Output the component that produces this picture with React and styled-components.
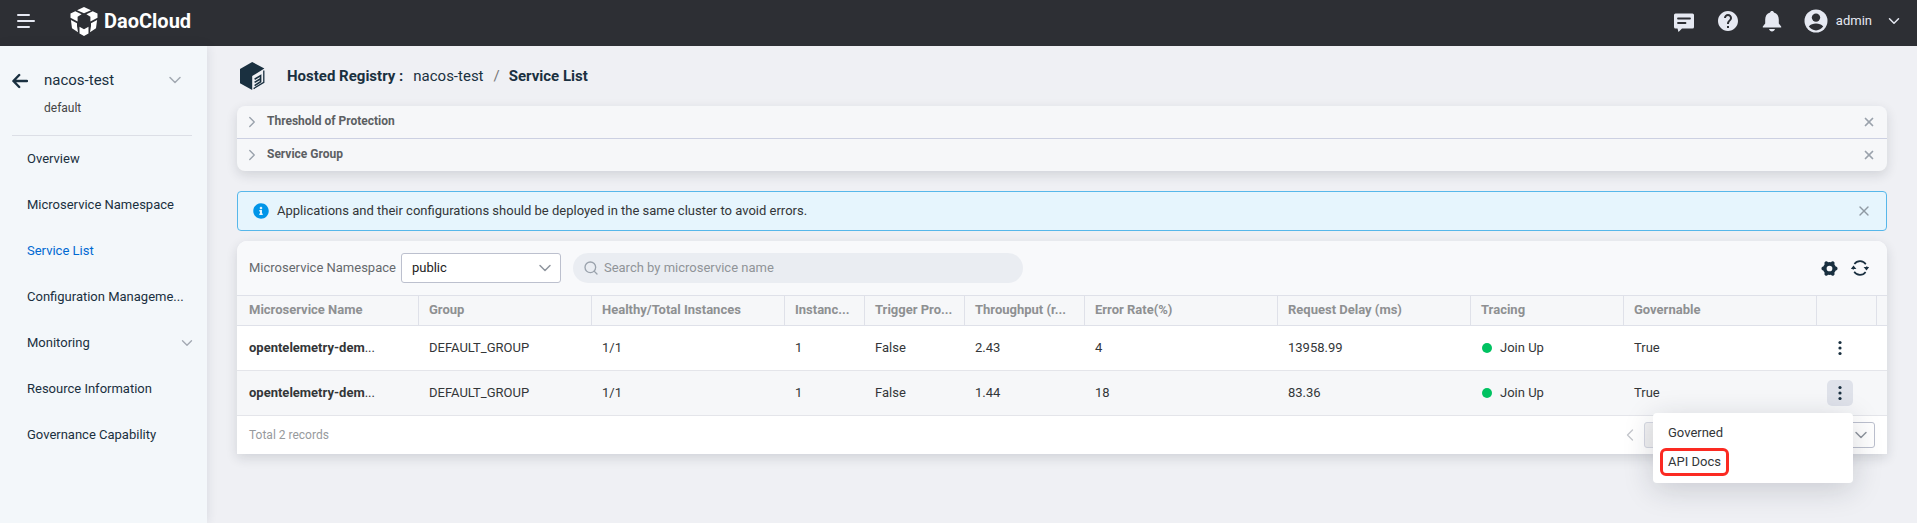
import React from 'react';
import styled, { createGlobalStyle } from 'styled-components';
import { ChevronDown, ChevronLeft, ChevronRight, Search, X } from 'lucide-react';
import { MdHelp } from 'react-icons/md';
import { FaInfoCircle } from 'react-icons/fa';

const GlobalStyle = createGlobalStyle`
  *, *::before, *::after { box-sizing: border-box; }
  body {
    margin: 0;
    background: #eff0f4;
    color: #333638;
    font-family: Roboto, "Noto Sans", sans-serif;
    font-size: 13px;
    line-height: 20px;
  }
  button, input, select { font: inherit; color: inherit; }
  svg { display: block; flex: none; }
`;

const Page = styled.div`
  display: flex;
  flex-direction: column;
  min-height: 100vh;
`;

const IconButton = styled.button`
  display: flex;
  align-items: center;
  justify-content: center;
  padding: 0;
  border: 0;
  background: none;
  color: ${(p) => p.$color || 'inherit'};
  cursor: pointer;
`;

/* ---------- top bar ---------- */

const TopBar = styled.header`
  display: flex;
  align-items: center;
  justify-content: space-between;
  height: 46px;
  padding: 0 14px 4px 16px;
  background: #2d2f34;
  color: #e6e9f2;
`;

const Brand = styled.div`
  display: flex;
  align-items: center;
  gap: 34px;
`;

const Logo = styled.a`
  display: flex;
  align-items: center;
  gap: 6px;
  color: #fff;
  font-size: 20px;
  font-weight: 700;
  text-decoration: none;
`;

const TopActions = styled.div`
  display: flex;
  align-items: center;
  gap: 20px;
`;

const UserButton = styled(IconButton)`
  gap: 8px;
  span { margin-right: 5px; }
`;

/* ---------- side bar ---------- */

const Body = styled.div`
  display: flex;
  flex: 1;
`;

const Sidebar = styled.aside`
  flex: none;
  width: 207px;
  background: #f3f7fa;
  box-shadow: 0 0 10px rgba(40, 50, 70, 0.12);
  color: #1a3040;
`;

const Workspace = styled.div`
  display: flex;
  align-items: flex-start;
  gap: 16px;
  height: 90px;
  margin: 0 15px 0 12px;
  padding-top: 24px;
  border-bottom: 1px solid #dcdfe6;
`;

const BackButton = styled(IconButton)`
  height: 22px;
`;

const WorkspaceText = styled.div`
  flex: 1;
`;

const WorkspacePicker = styled(IconButton)`
  justify-content: space-between;
  width: 100%;
  padding-right: 7px;
  font-size: 15px;
  svg { color: #a3a9b2; }
`;

const WorkspaceSub = styled.div`
  margin-top: 8px;
  color: #444;
  font-size: 12px;
`;

const NavItem = styled.a`
  display: flex;
  align-items: center;
  justify-content: space-between;
  height: 46px;
  padding: 0 11px 0 27px;
  color: ${(p) => (p.$active ? '#0069d2' : 'inherit')};
  text-decoration: none;
  svg { color: #a3a9b2; }
`;

/* ---------- main ---------- */

const Main = styled.main`
  flex: 1;
  min-width: 0;
  padding: 0 30px 30px;
`;

const Breadcrumb = styled.nav`
  display: flex;
  align-items: center;
  height: 60px;
  color: #1a3040;
  font-size: 15px;
  svg { margin: 0 22px 0 3px; }
  a { margin: 0 10px; color: inherit; text-decoration: none; }
  span { color: #777; }
  h1 { margin: 0 0 0 9px; font-size: 15px; }
`;

const Collapse = styled.section`
  border-radius: 8px;
  background: #f6f7f9;
  box-shadow: 0 4px 12px rgba(30, 35, 50, 0.14);
`;

const CollapseRow = styled.div`
  display: flex;
  align-items: center;
  justify-content: space-between;
  height: 32px;
  padding: 0 11px 0 6px;
  color: #9aa2ac;
  & + & {
    height: 33px;
    border-top: 1px solid #ccd0e2;
  }
`;

const CollapseToggle = styled(IconButton)`
  gap: 6px;
  font-size: 12px;
  font-weight: 700;
  span { padding-bottom: 2px; color: #5c5f63; }
`;

const Alert = styled.div`
  display: flex;
  align-items: center;
  gap: 8px;
  height: 40px;
  margin: 20px 0 10px;
  padding: 0 14px 0 15px;
  border: 1px solid #57b7ea;
  border-radius: 4px;
  background: #e6f5fd;
  p { flex: 1; margin: 0; }
  > svg { color: #0095e8; }
`;

const Panel = styled.section`
  border-radius: 10px 10px 0 0;
  background: #fff;
  box-shadow: 0 4px 12px rgba(30, 35, 50, 0.14);
`;

const Toolbar = styled.div`
  display: flex;
  align-items: center;
  height: 54px;
  padding: 0 18px 0 12px;
  border-radius: 10px 10px 0 0;
  background: #f8f9fb;
  label { color: #66696d; }
`;

const SelectWrap = styled.div`
  position: relative;
  width: ${(p) => p.$width};
  margin-left: ${(p) => p.$gap || '0'};
  svg {
    position: absolute;
    top: 0;
    bottom: 0;
    right: ${(p) => p.$inset || '6px'};
    margin: auto;
    color: #8f959e;
    pointer-events: none;
  }
`;

const Select = styled.select`
  display: block;
  width: 100%;
  height: ${(p) => p.$height};
  padding: 0 10px;
  border: 1px solid #bcc0ce;
  border-radius: 3px;
  background: #fff;
  color: #222;
  appearance: none;
`;

const SearchBox = styled.div`
  display: flex;
  align-items: center;
  gap: 5px;
  width: 450px;
  height: 30px;
  margin-left: 12px;
  padding: 0 10px;
  border-radius: 15px;
  background: #eaedf2;
  color: #9aa2ac;
  input {
    flex: 1;
    padding: 0;
    border: 0;
    outline: 0;
    background: none;
    color: #333638;
  }
  input::placeholder { color: #909498; opacity: 1; }
`;

const Tools = styled.div`
  display: flex;
  gap: 13px;
  margin-left: auto;
`;

const Table = styled.table`
  width: 100%;
  border-collapse: separate;
  border-spacing: 0;
  table-layout: fixed;
`;

const Th = styled.th`
  height: 31px;
  padding: 0 0 1px 10px;
  border: solid #dfe1e9;
  border-width: 1px 1px 1px 0;
  background: #f6f7f9;
  color: #8e9092;
  font-weight: 700;
  line-height: 20px;
  text-align: left;
  white-space: nowrap;
  &:first-child { padding-left: 12px; }
  &:last-child { border-right: 0; }
`;

const Row = styled.tr`
  background: ${(p) => (p.$hover ? '#f6f7f9' : '#fff')};
`;

const Td = styled.td`
  height: 45px;
  padding: 0 0 0 10px;
  border-bottom: 1px solid #e4e5ea;
  white-space: nowrap;
  &:first-child { padding-left: 12px; }
`;

const Status = styled.span`
  display: flex;
  align-items: center;
  gap: 8px;
  padding-bottom: 1px;
  &::before {
    content: '';
    width: 10px;
    height: 10px;
    margin-left: 1px;
    border-radius: 50%;
    background: #00c261;
  }
`;

const MenuAnchor = styled.div`
  position: relative;
  width: 26px;
`;

const MoreButton = styled(IconButton)`
  width: 26px;
  height: 26px;
  border-radius: 5px;
  background: ${(p) => (p.$open ? '#dfe2ea' : 'transparent')};
`;

const Menu = styled.div`
  position: absolute;
  z-index: 1;
  top: 33px;
  right: 0;
  display: flex;
  flex-direction: column;
  width: 200px;
  padding: 5px 7px;
  border-radius: 4px;
  background: #fff;
  box-shadow: 0 6px 30px rgba(30, 35, 50, 0.18);
`;

const MenuItem = styled.button`
  align-self: flex-start;
  height: ${(p) => (p.$marked ? '28px' : '30px')};
  padding: 0 5px;
  border: 3px solid ${(p) => (p.$marked ? '#fb2a22' : 'transparent')};
  border-radius: 6px;
  background: none;
  &:last-child { margin-bottom: 2px; }
`;

const Footer = styled.footer`
  display: flex;
  align-items: center;
  justify-content: space-between;
  height: 38px;
  padding: 0 12px;
  color: #979a9d;
  font-size: 12px;
`;

const Pager = styled.div`
  display: flex;
  align-items: center;
  color: #c4c7cc;
`;

const PageInput = styled.input`
  width: 50px;
  height: 26px;
  margin: 0 4px;
  border: 1px solid #d5d8e2;
  border-radius: 3px;
  background: #f1f1f2;
`;

/* ---------- drawings ---------- */

const MenuIcon = () => (
  <svg width="20" height="18" viewBox="0 0 20 18" fill="none" stroke="currentColor" strokeWidth="2" strokeLinecap="round">
    <path d="M2 3H13M2 9H18M2 15H13" />
  </svg>
);

const LogoMark = () => (
  <svg width="28" height="29" viewBox="0 0 28 29" fill="currentColor">
    <path d="M14 0 21 3.2 14 6.2 7 3.2Z" />
    <path d="M5.3 4.2 11.6 7.2 7.6 9.8V14.4L.5 10.8V6.5Z" />
    <path d="M22.7 4.2 16.4 7.2 20.4 9.8V14.4L27.5 10.8V6.5Z" />
    <path d="M.9 12.9 7 16.2V19L8 25.3 2 21.2Z" />
    <path d="M27.1 12.9 21 16.2V19L20 25.3 26 21.2Z" />
    <path d="M9.5 19.7 14 22.3 18.5 19.7V26.5L14 29 9.5 26.5Z" />
  </svg>
);

const MessageIcon = () => (
  <svg width="24" height="24" viewBox="0 0 24 24">
    <path fill="currentColor" d="M3.5 4.5H20.5A1.5 1.5 0 0 1 22 6V18A1.5 1.5 0 0 1 20.5 19.5H10L6.5 23 5.5 19.5H3.5A1.5 1.5 0 0 1 2 18V6A1.5 1.5 0 0 1 3.5 4.5Z" />
    <path stroke="#2d2f34" strokeWidth="1.8" strokeLinecap="round" d="M6 9.5H18M6 14H13.5" />
  </svg>
);

const BellIcon = () => (
  <svg width="24" height="24" viewBox="0 0 24 24" fill="currentColor">
    <path d="M12 2C13 2 13.7 2.6 13.9 3.4 17.2 4.3 18.8 7 18.8 10.5V14.5L21.2 17.6V18.4H2.8V17.6L5.2 14.5V10.5C5.2 7 6.8 4.3 10.1 3.4 10.3 2.6 11 2 12 2ZM9 20H15C14.6 21.5 13.4 22.4 12 22.4S9.4 21.5 9 20Z" />
  </svg>
);

const AvatarIcon = () => (
  <svg width="24" height="24" viewBox="0 0 24 24">
    <circle cx="12" cy="12" r="11.5" fill="currentColor" />
    <circle cx="12" cy="8.6" r="4.2" fill="#2d2f34" />
    <path fill="#2d2f34" d="M4.8 17.6C6.6 15.4 9.2 14.6 12 14.6S17.4 15.4 19.2 17.6C17.4 20 14.9 21.4 12 21.4S6.6 20 4.8 17.6Z" />
  </svg>
);

const BackIcon = () => (
  <svg width="16" height="16" viewBox="0 0 16 16" fill="none" stroke="currentColor" strokeWidth="2.4" strokeLinecap="round" strokeLinejoin="round">
    <path d="M15 8H1.8M7.2 2 1.4 8 7.2 14" />
  </svg>
);

const RegistryIcon = () => (
  <svg width="25" height="28" viewBox="0 0 25 28">
    <path fill="#1a3040" d="M12.2 0 24.4 6.6 12.2 14V28L0 21.3V6.9Z" />
    <path fill="none" stroke="#1a3040" strokeWidth="1.3" d="M23.8 8.6V20.4L13.6 26.6" />
    <path fill="none" stroke="#1a3040" strokeWidth="1.6" d="M14.6 17.2 20.6 13.6V19.8L14.6 23.6M14.6 20.4 20.6 16.7" />
  </svg>
);

const GearIcon = () => (
  <svg width="17" height="17" viewBox="0 0 16 16" fill="none" stroke="#1a3040">
    <circle cx="8" cy="8" r="4.4" strokeWidth="3.4" />
    <path strokeWidth="3.6" strokeLinecap="round" d="M2.2 8H2.8M13.2 8H13.8M5 3 5.3 3.5M11 3 10.7 3.5M5 13 5.3 12.5M11 13 10.7 12.5" />
  </svg>
);

const RefreshIcon = () => (
  <svg width="18" height="18" viewBox="0 0 18 18">
    <path fill="none" stroke="#1a3040" strokeWidth="1.6" d="M3.4 5A6.9 6.9 0 0 1 14.8 5.2M14.6 13A6.9 6.9 0 0 1 3.2 12.8" />
    <path fill="none" stroke="#1a3040" strokeWidth="1.4" d="M2.3 8V10.4M15.7 7.4V10" />
    <path fill="#1a3040" d="M2.5 6.6 5.4 10H-.2ZM15.5 11.4 12.6 8H18.2Z" />
  </svg>
);

const DotsIcon = () => (
  <svg width="4" height="16" viewBox="0 0 4 16" fill="#1a3040">
    <circle cx="2" cy="2.5" r="1.6" />
    <circle cx="2" cy="8" r="1.6" />
    <circle cx="2" cy="13.5" r="1.6" />
  </svg>
);

/* ---------- data ---------- */

const NAV = [
  { label: 'Overview' },
  { label: 'Microservice Namespace' },
  { label: 'Service List', active: true },
  { label: 'Configuration Manageme...' },
  { label: 'Monitoring', expandable: true },
  { label: 'Resource Information' },
  { label: 'Governance Capability' },
];

const COLUMNS = [
  { label: 'Microservice Name', width: 182 },
  { label: 'Group', width: 173 },
  { label: 'Healthy/Total Instances' },
  { label: 'Instanc...', width: 80 },
  { label: 'Trigger Pro...', width: 100 },
  { label: 'Throughput (r...', width: 120 },
  { label: 'Error Rate(%)' },
  { label: 'Request Delay (ms)' },
  { label: 'Tracing', width: 153 },
  { label: 'Governable' },
  { label: '', width: 60 },
  { label: '', width: 10 },
];

const ROWS = [
  { throughput: '2.43', errors: '4', delay: '13958.99' },
  { throughput: '1.44', errors: '18', delay: '83.36', open: true },
];

export default function App() {
  return (
    <Page>
      <GlobalStyle />
      <TopBar>
        <Brand>
          <IconButton aria-label="Toggle menu"><MenuIcon /></IconButton>
          <Logo href="#"><LogoMark />DaoCloud</Logo>
        </Brand>
        <TopActions>
          <IconButton aria-label="Messages"><MessageIcon /></IconButton>
          <IconButton aria-label="Help"><MdHelp size={24} /></IconButton>
          <IconButton aria-label="Notifications"><BellIcon /></IconButton>
          <UserButton>
            <AvatarIcon />
            <span>admin</span>
            <ChevronDown size={18} />
          </UserButton>
        </TopActions>
      </TopBar>
      <Body>
        <Sidebar>
          <Workspace>
            <BackButton aria-label="Back"><BackIcon /></BackButton>
            <WorkspaceText>
              <WorkspacePicker>nacos-test<ChevronDown size={20} strokeWidth={1.8} /></WorkspacePicker>
              <WorkspaceSub>default</WorkspaceSub>
            </WorkspaceText>
          </Workspace>
          <nav>
            {NAV.map((item) => (
              <NavItem key={item.label} href="#" $active={item.active}>
                {item.label}
                {item.expandable && <ChevronDown size={18} strokeWidth={1.8} />}
              </NavItem>
            ))}
          </nav>
        </Sidebar>
        <Main>
          <Breadcrumb>
            <RegistryIcon />
            <strong>Hosted Registry :</strong>
            <a href="#">nacos-test</a>
            <span>/</span>
            <h1>Service List</h1>
          </Breadcrumb>
          <Collapse>
            {['Threshold of Protection', 'Service Group'].map((title) => (
              <CollapseRow key={title}>
                <CollapseToggle><ChevronRight size={18} strokeWidth={1.8} /><span>{title}</span></CollapseToggle>
                <IconButton aria-label={`Remove ${title}`}><X size={14} strokeWidth={3} /></IconButton>
              </CollapseRow>
            ))}
          </Collapse>
          <Alert role="status">
            <FaInfoCircle size={16} />
            <p>Applications and their configurations should be deployed in the same cluster to avoid errors.</p>
            <IconButton aria-label="Close" $color="#8f9aa3"><X size={16} /></IconButton>
          </Alert>
          <Panel>
            <Toolbar>
              <label htmlFor="namespace">Microservice Namespace</label>
              <SelectWrap $width="160px" $gap="5px">
                <Select id="namespace" $height="30px"><option>public</option></Select>
                <ChevronDown size={20} strokeWidth={1.8} />
              </SelectWrap>
              <SearchBox>
                <Search size={16} />
                <input type="search" aria-label="Search" placeholder="Search by microservice name" />
              </SearchBox>
              <Tools>
                <IconButton aria-label="Settings"><GearIcon /></IconButton>
                <IconButton aria-label="Refresh"><RefreshIcon /></IconButton>
              </Tools>
            </Toolbar>
            <Table>
              <colgroup>
                {COLUMNS.map((c, i) => <col key={i} width={c.width} />)}
              </colgroup>
              <thead>
                <tr>{COLUMNS.map((c, i) => <Th key={i}>{c.label}</Th>)}</tr>
              </thead>
              <tbody>
                {ROWS.map((r) => (
                  <Row key={r.delay} $hover={r.open}>
                    <Td><strong>opentelemetry-dem</strong>...</Td>
                    <Td>DEFAULT_GROUP</Td>
                    <Td>1/1</Td>
                    <Td>1</Td>
                    <Td>False</Td>
                    <Td>{r.throughput}</Td>
                    <Td>{r.errors}</Td>
                    <Td>{r.delay}</Td>
                    <Td><Status>Join Up</Status></Td>
                    <Td>True</Td>
                    <Td>
                      <MenuAnchor>
                        <MoreButton aria-label="More" aria-expanded={!!r.open} $open={r.open}><DotsIcon /></MoreButton>
                        {r.open && (
                          <Menu>
                            <MenuItem>Governed</MenuItem>
                            <MenuItem $marked>API Docs</MenuItem>
                          </Menu>
                        )}
                      </MenuAnchor>
                    </Td>
                    <Td />
                  </Row>
                ))}
              </tbody>
            </Table>
            <Footer>
              <span>Total 2 records</span>
              <Pager>
                <IconButton aria-label="Previous page" disabled><ChevronLeft size={20} strokeWidth={1.6} /></IconButton>
                <PageInput aria-label="Page" disabled />
                <SelectWrap $width="177px" $inset="4px">
                  <Select aria-label="Records per page" $height="26px" />
                  <ChevronDown size={20} strokeWidth={1.8} />
                </SelectWrap>
              </Pager>
            </Footer>
          </Panel>
        </Main>
      </Body>
    </Page>
  );
}
